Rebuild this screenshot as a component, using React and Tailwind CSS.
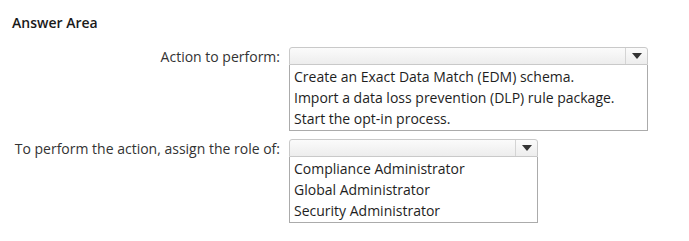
const font = { fontFamily: '"Segoe UI", "Open Sans", "Noto Sans", sans-serif' }

function Dropdown({ width, options }) {
    return (
        <div className={width}>
            <div className="flex h-[18px] border border-[#c9c9c9] rounded-t-[3px] bg-gradient-to-b from-[#fbfbfb] to-[#ededed]">
                <div className="flex-1" />
                <div className="w-[22px] border-l border-[#d4d4d4] flex items-center justify-center">
                    <svg width="10" height="6" viewBox="0 0 10 6">
                        <path d="M0 0 L10 0 L5 6 Z" fill="#333" />
                    </svg>
                </div>
            </div>
            <div className="border border-t-0 border-[#ababab] bg-white px-[4px] pt-[1px] pb-[1px]">
                {options.map((o) => (
                    <div key={o} className="h-[21px] leading-[21px] text-[14px] text-[#1e1e1e] whitespace-nowrap">
                        {o}
                    </div>
                ))}
            </div>
        </div>
    )
}

export default function App() {
    return (
        <div className="w-[689px] h-[241px] bg-white pl-[12px] pt-[13px]" style={font}>
            <h2 className="text-[14px] font-semibold text-[#1a1a1a] leading-[20px]">Answer Area</h2>

            <div className="mt-[14px] grid grid-cols-[268px_auto] gap-x-[9px] gap-y-[8px] items-start">
                <div className="text-right text-[14px] text-[#333] leading-[18px] mt-[1px]">Action to perform:</div>
                <Dropdown
                    width="w-[359px]"
                    options={[
                        'Create an Exact Data Match (EDM) schema.',
                        'Import a data loss prevention (DLP) rule package.',
                        'Start the opt-in process.',
                    ]}
                />

                <div className="text-right text-[14px] text-[#333] leading-[18px] mt-[1px]">To perform the action, assign the role of:</div>
                <Dropdown
                    width="w-[249px]"
                    options={['Compliance Administrator', 'Global Administrator', 'Security Administrator']}
                />
            </div>
        </div>
    )
}
